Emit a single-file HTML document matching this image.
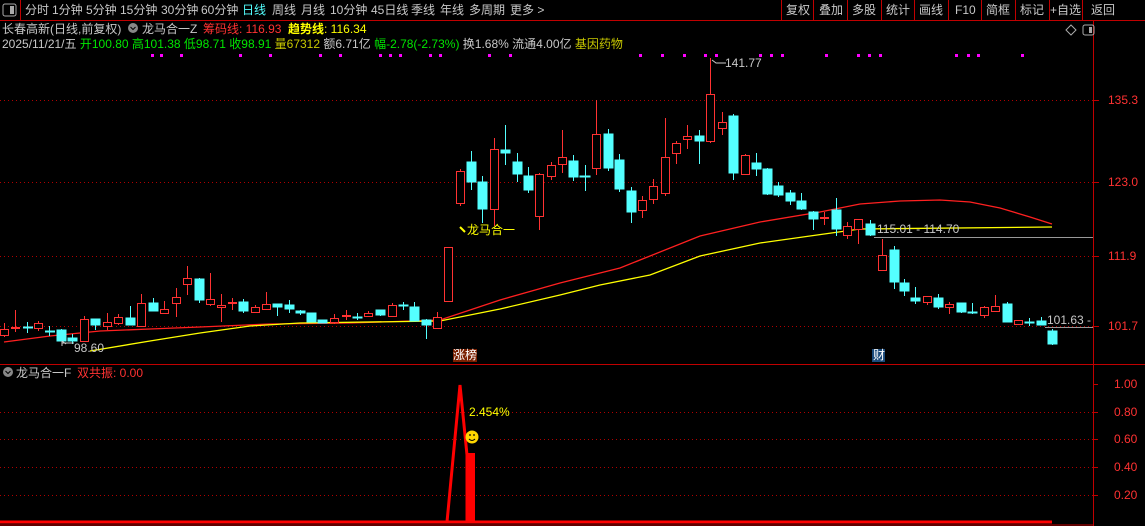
<!DOCTYPE html>
<html><head><meta charset="utf-8"><style>
body{margin:0;width:1145px;height:526px;background:#000;overflow:hidden;position:relative;font-family:"Liberation Sans","Noto Sans CJK SC",sans-serif;font-size:12px;}
.t{position:absolute;white-space:nowrap;line-height:14px;}
.g{color:#c8c8c8}.r{color:#ff3232}.y{color:#ffff00}.gr{color:#00e600}.c{color:#54ffff}.o{color:#c8c800}
</style></head><body>
<svg width="1145" height="526" style="position:absolute;left:0;top:0">
<g stroke="#c00000" stroke-width="1" fill="none">
<line x1="0" y1="20.5" x2="1145" y2="20.5"/>
<line x1="20.5" y1="0" x2="20.5" y2="20"/>
<line x1="781.5" y1="0" x2="781.5" y2="20"/><line x1="813.5" y1="0" x2="813.5" y2="20"/><line x1="847.5" y1="0" x2="847.5" y2="20"/><line x1="881.5" y1="0" x2="881.5" y2="20"/><line x1="914.5" y1="0" x2="914.5" y2="20"/><line x1="948.5" y1="0" x2="948.5" y2="20"/><line x1="981.5" y1="0" x2="981.5" y2="20"/><line x1="1015.5" y1="0" x2="1015.5" y2="20"/><line x1="1049.5" y1="0" x2="1049.5" y2="20"/><line x1="1082.5" y1="0" x2="1082.5" y2="20"/>
<line x1="1093.5" y1="20" x2="1093.5" y2="526"/>
<line x1="0" y1="364.5" x2="1145" y2="364.5"/>
<line x1="0" y1="525" x2="1093" y2="525"/>
<line x1="1093" y1="100.5" x2="1099" y2="100.5"/><line x1="1093" y1="182.5" x2="1099" y2="182.5"/><line x1="1093" y1="256.5" x2="1099" y2="256.5"/><line x1="1093" y1="326.5" x2="1099" y2="326.5"/>
<line x1="1093" y1="384.5" x2="1098" y2="384.5"/><line x1="1093" y1="412.5" x2="1098" y2="412.5"/><line x1="1093" y1="439.5" x2="1098" y2="439.5"/><line x1="1093" y1="467.5" x2="1098" y2="467.5"/><line x1="1093" y1="495.5" x2="1098" y2="495.5"/>
</g>
<g stroke="#b00000" stroke-dasharray="1,3" stroke-width="1">
<line x1="0" y1="100.5" x2="1093" y2="100.5"/><line x1="0" y1="182.5" x2="1093" y2="182.5"/><line x1="0" y1="256.5" x2="1093" y2="256.5"/><line x1="0" y1="326.5" x2="1093" y2="326.5"/>
<line x1="0" y1="412.5" x2="1093" y2="412.5"/><line x1="0" y1="439.5" x2="1093" y2="439.5"/><line x1="0" y1="467.5" x2="1093" y2="467.5"/><line x1="0" y1="495.5" x2="1093" y2="495.5"/>
</g>
<rect x="3" y="4" width="13" height="12" rx="2" fill="none" stroke="#aaa"/><rect x="10" y="6" width="4" height="8" fill="#aaa"/>
<path d="M1071 25l5 5-5 5-5-5z" fill="none" stroke="#aaa"/>
<rect x="1083" y="25" width="11" height="10" rx="2" fill="none" stroke="#aaa"/><rect x="1089" y="27" width="3" height="6" fill="#aaa"/>
<g fill="#ff00ff">
<rect x="151" y="54" width="3" height="3"/><rect x="160" y="54" width="3" height="3"/><rect x="180" y="54" width="3" height="3"/><rect x="239" y="54" width="3" height="3"/><rect x="269" y="54" width="3" height="3"/><rect x="319" y="54" width="3" height="3"/><rect x="339" y="54" width="3" height="3"/><rect x="379" y="54" width="3" height="3"/><rect x="389" y="54" width="3" height="3"/><rect x="399" y="54" width="3" height="3"/><rect x="429" y="54" width="3" height="3"/><rect x="439" y="54" width="3" height="3"/><rect x="488" y="54" width="3" height="3"/><rect x="509" y="54" width="3" height="3"/><rect x="639" y="54" width="3" height="3"/><rect x="661" y="54" width="3" height="3"/><rect x="683" y="54" width="3" height="3"/><rect x="704" y="54" width="3" height="3"/><rect x="715" y="54" width="3" height="3"/><rect x="759" y="54" width="3" height="3"/><rect x="770" y="54" width="3" height="3"/><rect x="781" y="54" width="3" height="3"/><rect x="825" y="54" width="3" height="3"/><rect x="857" y="54" width="3" height="3"/><rect x="868" y="54" width="3" height="3"/><rect x="879" y="54" width="3" height="3"/><rect x="955" y="54" width="3" height="3"/><rect x="967" y="54" width="3" height="3"/><rect x="977" y="54" width="3" height="3"/><rect x="1021" y="54" width="3" height="3"/>
</g>
<polyline fill="none" stroke="#ff2020" stroke-width="1.3" points="4,342 50,336 100,331 150,329 200,327 270,324 350,323 440,320 500,300 560,283 620,268 700,236 760,222 820,212 860,204 900,201 940,200 970,202 1000,208 1030,217 1052,224"/>
<polyline fill="none" stroke="#ffff00" stroke-width="1.3" points="90,351 150,341 200,333 250,326 300,323 440,321 500,309 560,295 600,285 650,275 700,256 760,243 810,236 860,229 1052,227"/>
<line x1="874" y1="237.5" x2="1093" y2="237.5" stroke="#999"/>
<line x1="1045" y1="327.5" x2="1093" y2="327.5" stroke="#999"/>
<g stroke-width="1">
<g stroke="#ff3232" fill="#000">
<line x1="4.5" y1="323" x2="4.5" y2="337"/><rect x="0.5" y="329.5" width="8" height="6"/>
<line x1="15.5" y1="310" x2="15.5" y2="332"/><rect x="11.5" y="327.5" width="8" height="1"/>
<line x1="38.5" y1="321" x2="38.5" y2="331"/><rect x="34.5" y="323.5" width="8" height="5"/>
<line x1="84.5" y1="316" x2="84.5" y2="341"/><rect x="80.5" y="319.5" width="8" height="22"/>
<line x1="107.5" y1="313" x2="107.5" y2="330"/><rect x="103.5" y="322.5" width="8" height="4"/>
<line x1="118.5" y1="314" x2="118.5" y2="325"/><rect x="114.5" y="317.5" width="8" height="6"/>
<line x1="141.5" y1="294" x2="141.5" y2="326"/><rect x="137.5" y="303.5" width="8" height="23"/>
<line x1="164.5" y1="301" x2="164.5" y2="313"/><rect x="160.5" y="309.5" width="8" height="4"/>
<line x1="176.5" y1="288" x2="176.5" y2="317"/><rect x="172.5" y="297.5" width="8" height="6"/>
<line x1="187.5" y1="266" x2="187.5" y2="295"/><rect x="183.5" y="278.5" width="8" height="6"/>
<line x1="210.5" y1="273" x2="210.5" y2="306"/><rect x="206.5" y="299.5" width="8" height="5"/>
<line x1="221.5" y1="294" x2="221.5" y2="322"/><rect x="217.5" y="305.5" width="8" height="2"/>
<line x1="232.5" y1="298" x2="232.5" y2="310"/><rect x="228.5" y="302.5" width="8" height="1"/>
<line x1="255.5" y1="305" x2="255.5" y2="312"/><rect x="251.5" y="307.5" width="8" height="5"/>
<line x1="266.5" y1="292" x2="266.5" y2="310"/><rect x="262.5" y="304.5" width="8" height="5"/>
<line x1="334.5" y1="314" x2="334.5" y2="324"/><rect x="330.5" y="318.5" width="8" height="4"/>
<line x1="346.5" y1="310" x2="346.5" y2="320"/><rect x="342.5" y="315.5" width="8" height="1"/>
<line x1="368.5" y1="311" x2="368.5" y2="317"/><rect x="364.5" y="313.5" width="8" height="3"/>
<line x1="392.5" y1="303" x2="392.5" y2="316"/><rect x="388.5" y="305.5" width="8" height="11"/>
<line x1="437.5" y1="312" x2="437.5" y2="329"/><rect x="433.5" y="317.5" width="8" height="11"/>
<rect x="444.5" y="247.5" width="8" height="54"/>
<line x1="460.5" y1="169" x2="460.5" y2="206"/><rect x="456.5" y="171.5" width="8" height="32"/>
<line x1="494.5" y1="138" x2="494.5" y2="226"/><rect x="490.5" y="149.5" width="8" height="60"/>
<line x1="539.5" y1="173" x2="539.5" y2="230"/><rect x="535.5" y="174.5" width="8" height="42"/>
<line x1="551.5" y1="162" x2="551.5" y2="180"/><rect x="547.5" y="165.5" width="8" height="11"/>
<line x1="562.5" y1="130" x2="562.5" y2="173"/><rect x="558.5" y="157.5" width="8" height="7"/>
<line x1="596.5" y1="100" x2="596.5" y2="175"/><rect x="592.5" y="134.5" width="8" height="34"/>
<line x1="642.5" y1="196" x2="642.5" y2="218"/><rect x="638.5" y="200.5" width="8" height="10"/>
<line x1="653.5" y1="179" x2="653.5" y2="204"/><rect x="649.5" y="186.5" width="8" height="13"/>
<line x1="665.5" y1="118" x2="665.5" y2="196"/><rect x="661.5" y="157.5" width="8" height="36"/>
<line x1="676.5" y1="141" x2="676.5" y2="164"/><rect x="672.5" y="143.5" width="8" height="10"/>
<line x1="687.5" y1="125" x2="687.5" y2="149"/><rect x="683.5" y="136.5" width="8" height="3"/>
<line x1="710.5" y1="58" x2="710.5" y2="143"/><rect x="706.5" y="94.5" width="8" height="47"/>
<line x1="722.5" y1="112" x2="722.5" y2="135"/><rect x="718.5" y="122.5" width="8" height="6"/>
<line x1="745.5" y1="154" x2="745.5" y2="175"/><rect x="741.5" y="155.5" width="8" height="19"/>
<line x1="824.5" y1="212" x2="824.5" y2="225"/><rect x="820.5" y="217.5" width="8" height="1"/>
<line x1="847.5" y1="222" x2="847.5" y2="239"/><rect x="843.5" y="226.5" width="8" height="9"/>
<line x1="858.5" y1="219" x2="858.5" y2="244"/><rect x="854.5" y="219.5" width="8" height="10"/>
<line x1="882.5" y1="239" x2="882.5" y2="270"/><rect x="878.5" y="255.5" width="8" height="15"/>
<line x1="927.5" y1="296" x2="927.5" y2="305"/><rect x="923.5" y="296.5" width="8" height="6"/>
<line x1="949.5" y1="302" x2="949.5" y2="314"/><rect x="945.5" y="304.5" width="8" height="3"/>
<line x1="984.5" y1="306" x2="984.5" y2="318"/><rect x="980.5" y="307.5" width="8" height="8"/>
<line x1="995.5" y1="295" x2="995.5" y2="311"/><rect x="991.5" y="306.5" width="8" height="5"/>
<rect x="1014.5" y="320.5" width="8" height="4"/>
</g>
<g stroke="#54ffff" fill="#54ffff">
<line x1="27.5" y1="322" x2="27.5" y2="333"/><rect x="23.5" y="327" width="9" height="1"/>
<line x1="49.5" y1="326" x2="49.5" y2="336"/><rect x="45.5" y="331" width="9" height="1"/>
<line x1="61.5" y1="329" x2="61.5" y2="341"/><rect x="57" y="330" width="9" height="11"/>
<line x1="72.5" y1="334" x2="72.5" y2="344"/><rect x="68" y="338" width="9" height="3"/>
<line x1="95.5" y1="319" x2="95.5" y2="330"/><rect x="91" y="319" width="9" height="6"/>
<line x1="130.5" y1="306" x2="130.5" y2="325"/><rect x="126" y="318" width="9" height="7"/>
<line x1="153.5" y1="298" x2="153.5" y2="311"/><rect x="149" y="303" width="9" height="8"/>
<line x1="199.5" y1="278" x2="199.5" y2="303"/><rect x="195" y="279" width="9" height="21"/>
<line x1="243.5" y1="299" x2="243.5" y2="313"/><rect x="239" y="302" width="9" height="9"/>
<line x1="277.5" y1="304" x2="277.5" y2="316"/><rect x="273" y="304" width="9" height="3"/>
<line x1="289.5" y1="300" x2="289.5" y2="313"/><rect x="285" y="305" width="9" height="4"/>
<line x1="300.5" y1="310" x2="300.5" y2="315"/><rect x="296" y="311" width="9" height="2"/>
<rect x="307" y="313" width="9" height="9"/>
<rect x="318" y="320" width="9" height="3"/>
<line x1="357.5" y1="313" x2="357.5" y2="320"/><rect x="353" y="317" width="9" height="1"/>
<line x1="380.5" y1="310" x2="380.5" y2="316"/><rect x="376" y="310" width="9" height="5"/>
<line x1="403.5" y1="302" x2="403.5" y2="310"/><rect x="399" y="305" width="9" height="1"/>
<line x1="414.5" y1="302" x2="414.5" y2="321"/><rect x="410" y="307" width="9" height="14"/>
<line x1="426.5" y1="319" x2="426.5" y2="339"/><rect x="422" y="320" width="9" height="5"/>
<line x1="471.5" y1="151" x2="471.5" y2="190"/><rect x="467" y="162" width="9" height="20"/>
<line x1="482.5" y1="176" x2="482.5" y2="223"/><rect x="478" y="182" width="9" height="27"/>
<line x1="505.5" y1="125" x2="505.5" y2="165"/><rect x="501" y="150" width="9" height="3"/>
<line x1="517.5" y1="153" x2="517.5" y2="182"/><rect x="513" y="162" width="9" height="12"/>
<line x1="528.5" y1="167" x2="528.5" y2="193"/><rect x="524" y="176" width="9" height="14"/>
<line x1="573.5" y1="155" x2="573.5" y2="181"/><rect x="569" y="161" width="9" height="16"/>
<line x1="585.5" y1="165" x2="585.5" y2="191"/><rect x="580" y="176" width="10" height="1"/>
<line x1="608.5" y1="129" x2="608.5" y2="171"/><rect x="604" y="134" width="9" height="34"/>
<line x1="619.5" y1="154" x2="619.5" y2="192"/><rect x="615" y="160" width="9" height="29"/>
<line x1="631.5" y1="187" x2="631.5" y2="223"/><rect x="627" y="191" width="9" height="21"/>
<line x1="699.5" y1="130" x2="699.5" y2="164"/><rect x="695" y="136" width="9" height="5"/>
<line x1="733.5" y1="114" x2="733.5" y2="180"/><rect x="729" y="116" width="9" height="57"/>
<line x1="756.5" y1="153" x2="756.5" y2="176"/><rect x="752" y="163" width="9" height="6"/>
<line x1="767.5" y1="168" x2="767.5" y2="195"/><rect x="763" y="169" width="9" height="25"/>
<line x1="778.5" y1="182" x2="778.5" y2="197"/><rect x="774" y="186" width="9" height="9"/>
<line x1="790.5" y1="190" x2="790.5" y2="205"/><rect x="786" y="193" width="9" height="8"/>
<line x1="801.5" y1="193" x2="801.5" y2="210"/><rect x="797" y="201" width="9" height="8"/>
<line x1="813.5" y1="211" x2="813.5" y2="230"/><rect x="809" y="212" width="9" height="7"/>
<line x1="836.5" y1="198" x2="836.5" y2="236"/><rect x="832" y="210" width="9" height="19"/>
<line x1="870.5" y1="220" x2="870.5" y2="236"/><rect x="866" y="224" width="9" height="11"/>
<line x1="894.5" y1="246" x2="894.5" y2="289"/><rect x="890" y="250" width="9" height="32"/>
<line x1="904.5" y1="279" x2="904.5" y2="296"/><rect x="900" y="283" width="9" height="8"/>
<line x1="915.5" y1="287" x2="915.5" y2="304"/><rect x="911" y="298" width="9" height="3"/>
<line x1="938.5" y1="294" x2="938.5" y2="309"/><rect x="934" y="298" width="9" height="9"/>
<line x1="961.5" y1="303" x2="961.5" y2="313"/><rect x="957" y="303" width="9" height="9"/>
<line x1="972.5" y1="303" x2="972.5" y2="314"/><rect x="968" y="312" width="9" height="1"/>
<line x1="1007.5" y1="302" x2="1007.5" y2="322"/><rect x="1003" y="304" width="9" height="18"/>
<line x1="1029.5" y1="318" x2="1029.5" y2="326"/><rect x="1025" y="322" width="9" height="1"/>
<line x1="1041.5" y1="317" x2="1041.5" y2="325"/><rect x="1037" y="321" width="9" height="4"/>
<line x1="1052.5" y1="329" x2="1052.5" y2="345"/><rect x="1048" y="331" width="9" height="13"/>
</g>
</g>
<path d="M62 341 l4 3 M62 341 v5 M62 343 h12" stroke="#ccc" fill="none"/>
<path d="M712 60 l4 3 h10" stroke="#ccc" fill="none"/>
<path d="M460 227 l5 5" stroke="#ffff00" stroke-width="2"/>
<rect x="453" y="349" width="24" height="13" fill="#7a1f00"/>
<rect x="872" y="349" width="13" height="13" fill="#1b4a7a"/>
<line x1="0" y1="522" x2="1052" y2="522" stroke="#ff0000" stroke-width="3"/>
<polyline fill="none" stroke="#ff0000" stroke-width="3" points="447,522 460,385 467,455 467,522"/>
<rect x="467" y="453" width="8" height="69" fill="#ff0000"/>
<circle cx="472" cy="437" r="6.5" fill="#ffd700"/><circle cx="470" cy="435" r="0.9" fill="#000"/><circle cx="474" cy="435" r="0.9" fill="#000"/><path d="M469 439 q3 3 6 0" stroke="#000" fill="none"/>
<circle cx="8" cy="372" r="5" fill="#888"/><path d="M5.5 371 l2.5 2.5 2.5-2.5" stroke="#000" fill="none"/>
<circle cx="133" cy="28" r="5" fill="#888"/><path d="M130.5 27 l2.5 2.5 2.5-2.5" stroke="#000" fill="none"/>
</svg>
<div class="t g" style="left:25px;top:3px">分时</div>
<div class="t g" style="left:52px;top:3px">1分钟</div>
<div class="t g" style="left:86px;top:3px">5分钟</div>
<div class="t g" style="left:120px;top:3px">15分钟</div>
<div class="t g" style="left:161px;top:3px">30分钟</div>
<div class="t g" style="left:201px;top:3px">60分钟</div>
<div class="t c" style="left:242px;top:3px">日线</div>
<div class="t g" style="left:272px;top:3px">周线</div>
<div class="t g" style="left:301px;top:3px">月线</div>
<div class="t g" style="left:330px;top:3px">10分钟</div>
<div class="t g" style="left:371px;top:3px">45日线</div>
<div class="t g" style="left:411px;top:3px">季线</div>
<div class="t g" style="left:440px;top:3px">年线</div>
<div class="t g" style="left:469px;top:3px">多周期</div>
<div class="t g" style="left:510px;top:3px">更多 &gt;</div>
<div class="t g" style="left:786px;top:3px">复权</div>
<div class="t g" style="left:819px;top:3px">叠加</div>
<div class="t g" style="left:852px;top:3px">多股</div>
<div class="t g" style="left:886px;top:3px">统计</div>
<div class="t g" style="left:919px;top:3px">画线</div>
<div class="t g" style="left:955px;top:3px">F10</div>
<div class="t g" style="left:986px;top:3px">简框</div>
<div class="t g" style="left:1020px;top:3px">标记</div>
<div class="t g" style="left:1050px;top:3px">+自选</div>
<div class="t g" style="left:1091px;top:3px">返回</div>
<div class="t g" style="left:2px;top:22px">长春高新(日线,前复权)</div>
<div class="t g" style="left:142px;top:22px">龙马合一Z</div>
<div class="t r" style="left:203px;top:22px">筹码线: 116.93</div>
<div class="t y" style="left:288px;top:22px"><b>趋势线</b>: 116.34</div>
<div class="t" style="left:2px;top:37px"><span class="g">2025/11/21/五 </span><span class="gr">开100.80 高101.38 低98.71 收98.91 </span><span class="o">量67312 </span><span class="g">额6.71亿 </span><span class="gr">幅-2.78(-2.73%) </span><span class="g">换1.68% 流通4.00亿 </span><span class="o">基因药物</span></div>
<div class="t g" style="left:725px;top:56px">141.77</div>
<div class="t g" style="left:74px;top:341px">98.60</div>
<div class="t y" style="left:467px;top:223px">龙马合一</div>
<div class="t g" style="left:877px;top:222px">115.01 - 114.70</div>
<div class="t g" style="left:1047px;top:313px">101.63 -</div>
<div class="t" style="left:453px;top:348px;color:#fff">涨榜</div>
<div class="t" style="left:873px;top:348px;color:#fff">财</div>
<div class="t y" style="left:469px;top:405px">2.454%</div>
<div class="t r" style="left:1108px;top:93px">135.3</div>
<div class="t r" style="left:1108px;top:175px">123.0</div>
<div class="t r" style="left:1108px;top:249px">111.9</div>
<div class="t r" style="left:1108px;top:319px">101.7</div>
<div class="t r" style="left:1114px;top:377px">1.00</div>
<div class="t r" style="left:1114px;top:405px">0.80</div>
<div class="t r" style="left:1114px;top:432px">0.60</div>
<div class="t r" style="left:1114px;top:460px">0.40</div>
<div class="t r" style="left:1114px;top:488px">0.20</div>
<div class="t g" style="left:16px;top:366px">龙马合一F</div>
<div class="t r" style="left:77px;top:366px">双共振: 0.00</div>
</body></html>
